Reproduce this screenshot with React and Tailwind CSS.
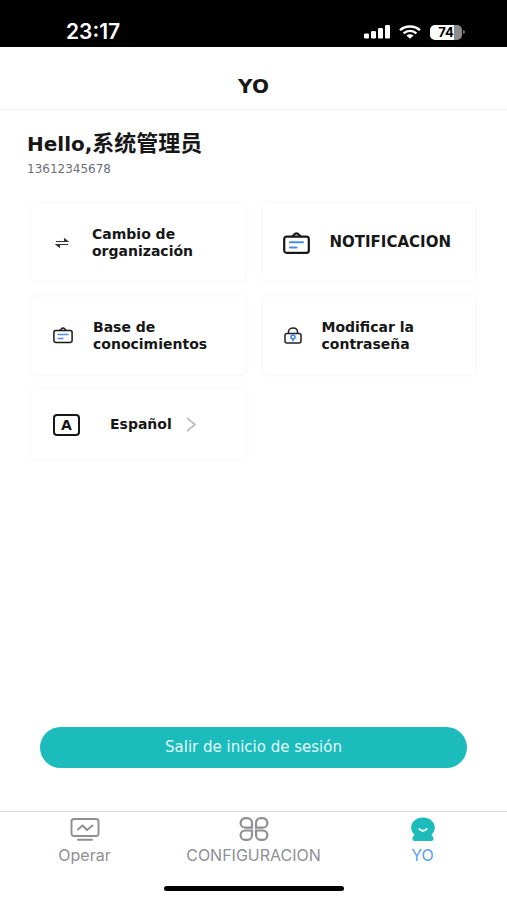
const BODY = 'font-["DejaVu_Sans","Noto_Sans_CJK_SC",sans-serif]';

function StatusBar() {
  return (
    <div className='flex h-[47px] items-end justify-between bg-black pr-[42px] pb-[3px] pl-[66px] font-["Inter",sans-serif] text-white'>
      <span className="text-[21px] leading-6 font-semibold">23:17</span>
      <div className="flex h-6 items-center gap-[9px]">
        <svg width="26" height="14" viewBox="0 0 26 14" fill="currentColor" aria-hidden="true">
          <rect x="0" y="8.5" width="5" height="5" rx="1.2" />
          <rect x="7" y="6" width="5" height="7.5" rx="1.2" />
          <rect x="14" y="3" width="5" height="10.5" rx="1.2" />
          <rect x="21" y="0" width="5" height="13.5" rx="1.2" />
        </svg>
        <svg width="22" height="14" viewBox="0 0 22 14" aria-hidden="true">
          <g fill="none" stroke="currentColor" strokeWidth="2.5">
            <path d="M1 5.2C6.5 0.2 15.5 0.2 21 5.2" />
            <path d="M4.6 8.4C8.4 5.2 13.6 5.2 17.4 8.4" />
          </g>
          <path d="M7.4 10.6C9.6 8.9 12.4 8.9 14.6 10.6L11 13.8Z" fill="currentColor" />
        </svg>
        <div className="flex items-center gap-px">
          <div className="flex h-[15px] w-8 items-center justify-center rounded-[5px] bg-linear-to-r from-white from-76% to-[#8b8b8b] to-76% text-[13px] leading-none font-bold text-black">
            74
          </div>
          <span className="h-1 w-[2px] rounded-r bg-[#777777]" />
        </div>
      </div>
    </div>
  );
}

function Board({ className, strokeWidth }) {
  return (
    <svg className={className} viewBox="0 0 27 22" fill="none" strokeLinecap="round" aria-hidden="true">
      <rect x="1.2" y="4.6" width="24.6" height="16.2" rx="2.4" stroke="#171717" strokeWidth={strokeWidth} />
      <path d="M9.5 4.2C11 3.4 11.3 1.3 13.5 1.3S16 3.4 17.5 4.2" stroke="#171717" strokeWidth={strokeWidth} />
      <path d="M7 10.2H20M7 15.4H13.5" stroke="#4a8ee8" strokeWidth="2" />
    </svg>
  );
}

function Swap() {
  return (
    <svg className="w-[14px] shrink-0" viewBox="0 0 14 12" fill="none" stroke="#333" strokeWidth="1.2" aria-hidden="true">
      <path d="M1 4.5H12.8L9 1.5M13 7.5H1.2L5 10.5" />
      <path d="M9 1.5L12.8 4.5H9ZM5 10.5L1.2 7.5H5Z" fill="#333" stroke="none" />
    </svg>
  );
}

function Lock() {
  return (
    <svg className="w-[18px] shrink-0" viewBox="0 0 18 17" fill="none" aria-hidden="true">
      <rect x="1" y="6.5" width="16" height="9.5" rx="2" stroke="#222" strokeWidth="1.5" />
      <path d="M4.5 6.5V5C4.5 -0.3 13.5 -0.3 13.5 5V6.5" stroke="#222" strokeWidth="1.5" />
      <circle cx="9" cy="10" r="2" stroke="#3b87f0" strokeWidth="1.6" />
      <path d="M9 12V14.3" stroke="#3b87f0" strokeWidth="1.6" />
    </svg>
  );
}

function LetterBox() {
  return (
    <span
      aria-hidden="true"
      className="flex h-[22px] w-[27px] shrink-0 items-center justify-center rounded-[4px] border-2 border-[#171717] text-[14px] leading-none"
    >
      A
    </span>
  );
}

const card =
  "flex items-center rounded-[4px] bg-white text-left text-[14px] leading-[17px] font-bold text-[#171717] shadow-[0_0_6px_rgba(0,0,0,0.05)]";

function Tab({ label, active, children }) {
  return (
    <button
      type="button"
      aria-current={active ? "page" : undefined}
      className={
        active
          ? "flex flex-1 flex-col items-center gap-1 text-[#5a9ff5]"
          : "flex flex-1 flex-col items-center gap-1 text-[#8f8f94]"
      }
    >
      {children}
      <span>{label}</span>
    </button>
  );
}

export default function App() {
  return (
    <div className={`flex min-h-screen flex-col bg-white text-[#171717] ${BODY}`}>
      <StatusBar />
      <header className="flex h-[63px] items-center justify-center border-b border-[#f3f3f3] pt-4">
        <h1 className="text-[20px] leading-6 font-bold">YO</h1>
      </header>

      <main className="flex flex-1 flex-col">
        <section className="px-[27px] pt-[21px]">
          <h2 className="flex items-center text-[20px] leading-[26px] font-bold">
            <span>Hello,</span>
            <span className="text-[22px]">系统管理员</span>
          </h2>
          <p className="text-[12px] leading-6 text-[#6b6f76]">13612345678</p>
        </section>

        <section className="grid grid-cols-2 gap-x-[18px] gap-y-4 px-8 pt-[23px]">
          <button type="button" className={`h-[77px] gap-[23px] pl-[23px] ${card}`}>
            <Swap />
            <span>
              Cambio de
              <br />
              organización
            </span>
          </button>
          <button type="button" className={`h-[77px] gap-5 pl-5 ${card}`}>
            <Board className="w-[27px] shrink-0" strokeWidth="2.2" />
            <span className="text-[15px]">NOTIFICACION</span>
          </button>
          <button type="button" className={`h-[77px] gap-5 pl-[21px] ${card}`}>
            <Board className="w-5 shrink-0" strokeWidth="2" />
            <span>
              Base de
              <br />
              conocimientos
            </span>
          </button>
          <button type="button" className={`h-[77px] gap-5 pl-[21px] ${card}`}>
            <Lock />
            <span>
              Modificar la
              <br />
              contraseña
            </span>
          </button>
          <button type="button" className={`h-[69px] pl-[21px] ${card}`}>
            <LetterBox />
            <span className="pr-[14px] pl-[30px]">Español</span>
            <svg className="w-[10px] shrink-0" viewBox="0 0 10 15" fill="none" stroke="#bdbdbd" strokeWidth="1.8" aria-hidden="true">
              <path d="M1 1L9 7.5L1 14" />
            </svg>
          </button>
        </section>

        <div className="mt-auto px-10 pb-[43px]">
          <button type="button" className="h-[41px] w-full rounded-full bg-[#1cbcbc] text-[15px] text-[#e2fafa]">
            Salir de inicio de sesión
          </button>
        </div>
      </main>

      <footer className="border-t border-[#dcdcdc]">
        <nav className='flex pt-[5px] font-["Inter",sans-serif] text-[16px] leading-5'>
          <Tab label="Operar">
            <svg width="30" height="24" viewBox="0 0 30 24" fill="none" stroke="currentColor" strokeWidth="1.9" strokeLinecap="round" aria-hidden="true">
              <rect x="1.5" y="2" width="27" height="17" rx="2.5" />
              <path d="M8 12.5L12.5 8.5L17 13L22.5 8.5M8 22.7H22" strokeLinejoin="round" />
            </svg>
          </Tab>
          <Tab label="CONFIGURACION">
            <svg width="30" height="24" viewBox="0 0 30 24" fill="none" stroke="currentColor" strokeWidth="2.2" aria-hidden="true">
              <path d="M13 10.6H6.3A4.7 4.7 0 0 1 6.3 1.2H8.3A4.7 4.7 0 0 1 13 5.9Z" />
              <path d="M17 10.6H23.7A4.7 4.7 0 0 0 23.7 1.2H21.7A4.7 4.7 0 0 0 17 5.9Z" />
              <path d="M13 13.5H6.3A4.7 4.7 0 0 0 6.3 22.9H8.3A4.7 4.7 0 0 0 13 18.2Z" />
              <path d="M17 13.5H23.7A4.7 4.7 0 0 1 23.7 22.9H21.7A4.7 4.7 0 0 1 17 18.2Z" />
            </svg>
          </Tab>
          <Tab label="YO" active>
            <svg width="24" height="24" viewBox="0 0 24 24" fill="#1cbcbc" aria-hidden="true">
              <path d="M12 0.5C18.8 0.5 23.8 5 23.8 10.5C23.8 13.7 22.5 15.8 20.5 17.5C20.8 18.8 22.5 19.5 22.5 21.5C22.5 23.2 21.7 24 20.2 24H3.8C2.3 24 1.5 23.2 1.5 21.5C1.5 19.5 3.2 18.8 3.5 17.5C1.5 15.8 0.2 13.7 0.2 10.5C0.2 5 5.2 0.5 12 0.5Z" />
              <path d="M8.3 12C9.8 14.3 14.2 14.3 15.7 12" fill="none" stroke="#fff" strokeWidth="1.8" strokeLinecap="round" />
            </svg>
          </Tab>
        </nav>
        <div className="flex justify-center pt-[21px] pb-[9px]">
          <div className="h-[5px] w-[180px] rounded-full bg-black" />
        </div>
      </footer>
    </div>
  );
}
